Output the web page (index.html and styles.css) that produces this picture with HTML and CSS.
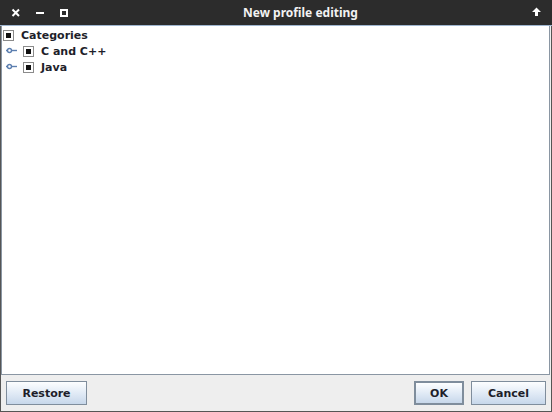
FILE: index.html
```html
<!DOCTYPE html>
<html>
<head>
<meta charset="utf-8">
<link rel="stylesheet" href="styles.css">
</head>
<body>
<div class="window">
  <div class="titlebar">
    <div class="tb-left">
      <svg class="tb-icon" width="24" height="25" viewBox="0 0 24 25"><path d="M8.5 9.5 L15 16 M15 9.5 L8.5 16" stroke="#fff" stroke-width="2" fill="none"/></svg>
      <svg class="tb-icon" width="24" height="25" viewBox="0 0 24 25"><rect x="8" y="12" width="8" height="2" fill="#fff"/></svg>
      <svg class="tb-icon" width="24" height="25" viewBox="0 0 24 25"><rect x="9" y="10" width="6" height="6" stroke="#fff" stroke-width="2" fill="none"/></svg>
    </div>
    <div class="title">New profile editing</div>
    <div class="tb-right">
      <svg width="27" height="25" viewBox="0 0 27 25"><path d="M10.5 7.5 L6 12 H9 V16 H12 V12 H15 Z" transform="translate(1 0)" fill="#fff"/></svg>
    </div>
  </div>
  <div class="content">
    <div class="row">
      <span class="check"><span class="mark"></span></span>
      <span class="label">Categories</span>
    </div>
    <div class="row child">
      <svg class="handle" width="20" height="16" viewBox="0 0 20 16"><circle cx="6.5" cy="7.5" r="2" stroke="#5c7fb0" stroke-width="1.4" fill="none"/><path d="M8.5 7.5 H14" stroke="#5c7fb0" stroke-width="1.4"/><path d="M3 7.5 H4.5" stroke="#5c7fb0" stroke-width="1.4"/></svg>
      <span class="check"><span class="mark"></span></span>
      <span class="label">C and C++</span>
    </div>
    <div class="row child">
      <svg class="handle" width="20" height="16" viewBox="0 0 20 16"><circle cx="6.5" cy="7.5" r="2" stroke="#5c7fb0" stroke-width="1.4" fill="none"/><path d="M8.5 7.5 H14" stroke="#5c7fb0" stroke-width="1.4"/><path d="M3 7.5 H4.5" stroke="#5c7fb0" stroke-width="1.4"/></svg>
      <span class="check"><span class="mark"></span></span>
      <span class="label">Java</span>
    </div>
  </div>
  <div class="footer">
    <button class="btn restore">Restore</button>
    <div class="spacer"></div>
    <button class="btn ok">OK</button>
    <button class="btn cancel">Cancel</button>
  </div>
</div>
</body>
</html>
```
FILE: styles.css
```css
html, body {
  margin: 0;
  padding: 0;
}
body {
  width: 552px;
  height: 412px;
  overflow: hidden;
  background: #eeeeee;
  font-family: "DejaVu Sans", sans-serif;
}
.window {
  width: 552px;
  height: 412px;
  box-sizing: border-box;
  display: flex;
  flex-direction: column;
  border-left: 1px solid #555;
  border-right: 1px solid #555;
  border-bottom: 1px solid #555;
  background: #eeeeee;
}
.titlebar {
  height: 25px;
  flex: none;
  background: #2c2c2c;
  border-bottom: 1px solid #9fb6d0;
  display: flex;
  align-items: center;
  margin: 0 -1px;
}
.tb-left {
  display: flex;
  width: 76px;
  padding-left: 4px;
  box-sizing: border-box;
}
.tb-icon {
  display: block;
  flex: none;
}
.title {
  flex: 1;
  text-align: center;
  color: #f2f2f2;
  font-family: "Noto Sans", "DejaVu Sans", sans-serif;
  font-weight: bold;
  font-size: 12px;
}
.tb-right {
  width: 27px;
  display: flex;
}
.content {
  flex: 1;
  background: #ffffff;
  border: 1px solid #8a96a3;
  border-top: none;
  margin: 0 1px 0 0;
  padding-top: 1px;
  padding-left: 1px;
}
.row {
  height: 16px;
  display: flex;
  align-items: center;
}
.handle {
  display: block;
  flex: none;
}
.check {
  width: 9px;
  height: 9px;
  border: 1px solid #8b8b8b;
  background: #fff;
  display: flex;
  align-items: center;
  justify-content: center;
  flex: none;
}
.mark {
  width: 5px;
  height: 5px;
  background: #111;
}
.label {
  margin-left: 7px;
  font-weight: bold;
  font-size: 11px;
  color: #1e1e2a;
}
.footer {
  height: 36px;
  flex: none;
  display: flex;
  align-items: center;
  padding: 0 5px 0 5px;
  gap: 7px;
}
.spacer {
  flex: 1;
}
.btn {
  height: 24px;
  box-sizing: border-box;
  border: 1px solid #7f8d9c;
  background: linear-gradient(#fdfeff, #dfe9f5 55%, #c7d7ea);
  font-family: "DejaVu Sans", sans-serif;
  font-weight: bold;
  font-size: 11px;
  color: #1e1e2a;
  padding: 0;
  margin: 0;
}
.restore { width: 81px; }
.ok { width: 50px; border: 2px solid #7f8d9c; }
.cancel { width: 75px; }
```
